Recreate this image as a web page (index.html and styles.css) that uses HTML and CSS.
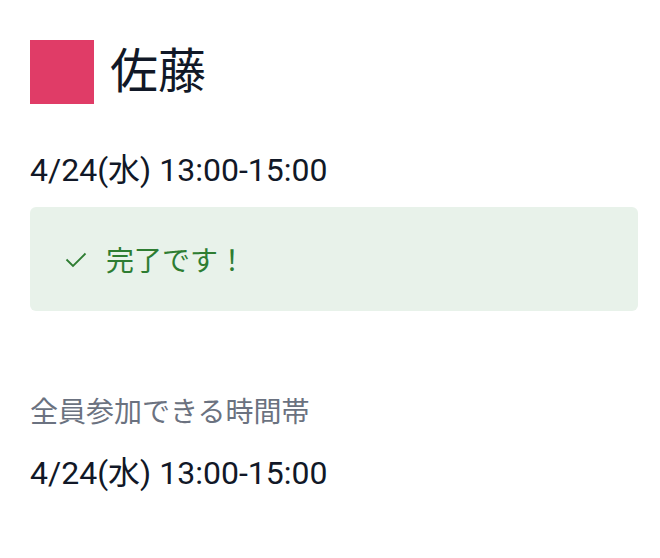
FILE: index.html
```html
<!DOCTYPE html>
<html lang="ja">
<head>
  <meta charset="UTF-8">
  <meta name="viewport" content="width=device-width, initial-scale=1.0">
  <title>佐藤</title>
  <link rel="stylesheet" href="styles.css">
</head>
<body>
  <div class="container">
    <div class="header">
      <div class="color-box"></div>
      <h1>佐藤</h1>
    </div>

    <p class="slot">4/24(水) 13:00-15:00</p>

    <div class="alert">
      <svg class="alert-icon" viewBox="0 0 24 24">
        <path d="M2.5 12.5l6.5 6.5L21.5 6.5" />
      </svg>
      <span>完了です！</span>
    </div>

    <p class="label">全員参加できる時間帯</p>
    <p class="slot">4/24(水) 13:00-15:00</p>
  </div>
</body>
</html>
```

FILE: styles.css
```css
body {
  margin: 0;
  padding: 0;
  font-family: Roboto, 'Noto Sans CJK JP', sans-serif;
  background-color: #fff;
  color: #111827;
}
.container {
  padding: 40px 22px 0 30px;
}
.header {
  display: flex;
  align-items: center;
  gap: 16px;
}
.color-box {
  width: 64px;
  height: 64px;
  background-color: #e03c67;
}
h1 {
  margin: 0;
  font-size: 48px;
  font-weight: 400;
  line-height: 64px;
}
.slot {
  margin: 46px 0 0;
  font-size: 32px;
  line-height: 40px;
}
.alert {
  display: flex;
  align-items: center;
  gap: 18px;
  margin-top: 17px;
  padding: 0 34px;
  height: 104px;
  background-color: #e8f2ea;
  border-radius: 6px;
  color: #2e7d32;
  font-size: 28px;
}
.alert-icon {
  width: 24px;
  height: 24px;
  fill: none;
  stroke: #2e7d32;
  stroke-width: 1.8;
}
.label {
  margin: 82px 0 0;
  font-size: 28px;
  line-height: 40px;
  color: #6b7280;
}
.label + .slot {
  margin-top: 20px;
}
```
